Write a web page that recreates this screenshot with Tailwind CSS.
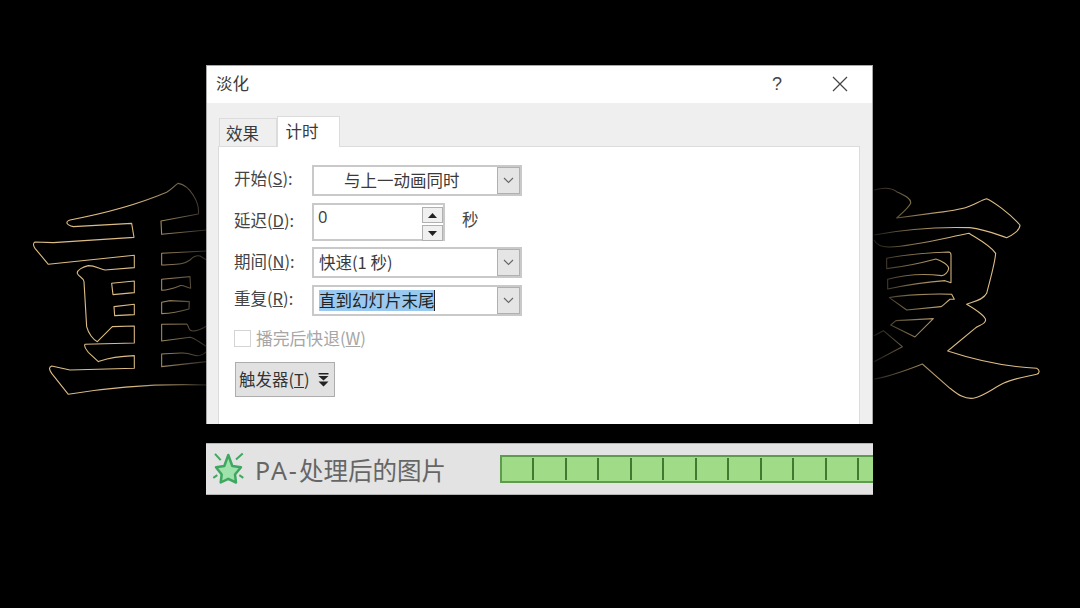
<!DOCTYPE html>
<html lang="zh-CN">
<head>
<meta charset="utf-8">
<script src="https://cdn.jsdelivr.net/npm/@tailwindcss/browser@4"></script>
</head>
<body class="bg-black">
<div class="relative w-[1080px] h-[608px] overflow-hidden bg-black font-['Noto_Sans_CJK_SC',sans-serif] text-[#333]">

  <!-- outlined glyphs behind the dialog -->
  <svg class="absolute left-0 top-0" width="1080" height="608" viewBox="0 0 1080 608" fill="none" stroke-linejoin="round">
    <defs>
      <linearGradient id="gl" gradientUnits="userSpaceOnUse" x1="330" y1="0" x2="560" y2="0">
        <stop offset="0" stop-color="#dcbc84"/><stop offset="0.4" stop-color="#a08a60"/><stop offset="1" stop-color="#2c2822"/>
      </linearGradient>
      <linearGradient id="gr" gradientUnits="userSpaceOnUse" x1="10" y1="0" x2="260" y2="0">
        <stop offset="0" stop-color="#1c1a16"/><stop offset="0.5" stop-color="#8a7650"/><stop offset="1" stop-color="#dcbc84"/>
      </linearGradient>
    </defs>
    <g transform="translate(20 170) scale(0.3333)" stroke="url(#gl)" stroke-width="3.3">
      <path d="M560 180 L425 193 L423 153 L535 132 C540 100 510 45 475 40 C465 45 460 55 440 67 C350 105 230 135 150 150 C135 155 138 165 160 170 L335 160 L342 202 L100 218 L45 216 C38 220 40 228 45 235 L85 283 L343 256 L343 293 L255 300 C235 295 225 287 205 287 C190 290 170 300 172 310 C175 320 190 322 192 335 L200 470 C205 490 220 510 232 515 L277 470 L343 468 L343 519 L195 523 C190 530 200 540 205 547 L235 575 C250 570 270 560 343 557 L343 595 L150 600 L95 588 C85 592 88 600 95 610 L145 673 C250 655 400 640 560 645"/>
      <path d="M275 340 L343 333 L343 368 L279 374 Z"/>
      <path d="M282 410 L343 403 L343 434 L284 437 Z"/>
      <path d="M560 243 L425 250 L425 285 C470 283 490 285 510 270 C520 260 530 255 540 258 L560 270"/>
      <path d="M425 328 L510 320 L512 355 C500 352 490 345 480 347 C460 355 445 360 425 361 Z"/>
      <path d="M425 397 L450 392 L508 395 L507 417 C480 425 450 430 425 431 Z"/>
      <path d="M560 468 C540 480 520 487 510 480 C505 475 505 465 500 462 L425 463 L425 513 L510 502 C525 505 535 515 560 530"/>
      <path d="M560 545 C545 558 535 560 520 555 C490 545 470 550 425 552 L425 590 L560 575"/>
    </g>
    <g transform="translate(870 170) scale(0.3333)" stroke="url(#gr)" stroke-width="3.3">
      <path d="M12 60 C30 55 60 50 80 65 C100 75 125 85 122 100 C115 115 95 130 80 144 L200 128 C240 123 280 118 300 108 C320 100 335 90 350 86 C370 95 420 130 450 165 C450 180 430 195 410 203 C385 195 345 178 300 173 C200 170 100 178 12 195"/>
      <path d="M12 210 C20 225 40 232 60 231 C130 228 220 205 297 190 C320 205 360 225 377 250 C375 280 360 330 350 370 C340 390 310 395 290 403 C310 415 345 435 347 450 C345 465 325 465 315 475 L233 543 C300 565 400 590 500 595 C510 600 510 610 500 613 C470 620 430 625 400 640 C370 655 340 680 310 685 C280 688 260 670 240 655 L157 582 C110 600 60 620 12 627"/>
      <path d="M50 265 L50 296 C100 290 150 280 198 267 C215 272 235 285 236 295 C235 305 225 317 215 317 C160 310 100 315 53 328 L53 357 C110 345 180 335 225 332 L243 338 L243 255 C243 250 240 246 235 246 C180 248 100 255 50 265 Z"/>
      <path d="M58 383 C100 375 190 370 245 373 L253 388 L240 388 C230 395 222 405 213 410 L110 420 Z"/>
      <path d="M62 465 L78 452 L190 446 L135 501 Z"/>
      <path d="M12 497 L40 482 L97 530 L12 575"/>
    </g>
  </svg>

  <div class="relative ml-[206px] pt-[65px] w-[667px] flex flex-col gap-[19px]">

    <!-- dialog -->
    <div class="h-[359px] flex flex-col bg-[#efefef] border-l border-r border-t border-[#a8a8a8] overflow-hidden">
      <div class="h-[37px] shrink-0 bg-white flex items-center pl-[9px] pb-[2px] text-[16.5px] leading-none">
        <span class="flex-1 text-[#3a3a3a]">淡化</span>
        <span class="w-[20px] text-center text-[18px] text-[#444] font-['Liberation_Sans',sans-serif] mr-[45px]">?</span>
        <svg class="mr-[24px]" width="16" height="16" viewBox="0 0 16 16" fill="none" stroke="#444" stroke-width="1.2"><path d="M1 1 L15 15 M15 1 L1 15"/></svg>
      </div>

      <div class="flex-1 flex flex-col pl-[11px] pr-[12px] pt-[12px]">
        <div class="flex items-end h-[31px] shrink-0 text-[16.5px] leading-none">
          <div class="w-[58px] h-[28px] bg-[#efefef] border border-b-0 border-[#dcdcdc] flex items-center justify-center pt-[1px] pr-[11px] ml-[1px] text-[#3a3a3a]">效果</div>
          <div class="relative z-10 w-[63px] h-[31px] -mb-[1px] bg-white border border-b-0 border-[#dcdcdc] flex items-center justify-center pb-[2px] pr-[13px] text-[#3a3a3a]">计时</div>
        </div>
        <div class="flex-1 bg-white border border-[#dcdcdc] border-b-0 pl-[15px] pt-[18px] text-[16.5px] leading-none">

          <div class="flex items-center h-[31px]">
            <span class="w-[78px] text-[#444] -mt-[4px]">开始(<u>S</u>):</span>
            <div class="w-[210px] h-[31px] border-2 border-[#c9c9c9] bg-white flex items-center pl-[30px]">
              <span class="flex-1 text-[#3a3a3a] -mt-[1px]">与上一动画同时</span>
              <div class="w-[23px] h-[27px] bg-[#e5e5e5] border border-[#b0b0b0] flex items-center justify-center">
                <svg width="11" height="7" viewBox="0 0 11 7" fill="none" stroke="#666" stroke-width="1.1"><path d="M1 1 L5.5 5.5 L10 1"/></svg>
              </div>
            </div>
          </div>

          <div class="flex items-center h-[38px] mt-[7px]">
            <span class="w-[78px] text-[#444] -mt-[4px]">延迟(<u>D</u>):</span>
            <div class="w-[133px] h-[38px] border-2 border-[#c9c9c9] bg-white flex items-start pl-[4px] pt-[2px]">
              <span class="flex-1 text-[#3a3a3a] font-['Open_Sans',sans-serif] leading-[20px]">0</span>
              <div class="flex flex-col gap-[2px]">
                <div class="w-[21px] h-[16px] bg-[#f0f0f0] border border-[#b0b0b0] flex items-center justify-center">
                  <svg width="9" height="5" viewBox="0 0 9 5" fill="#222"><path d="M4.5 0 L9 5 L0 5 Z"/></svg>
                </div>
                <div class="w-[21px] h-[16px] bg-[#f0f0f0] border border-[#b0b0b0] flex items-center justify-center">
                  <svg width="9" height="5" viewBox="0 0 9 5" fill="#222"><path d="M0 0 L9 0 L4.5 5 Z"/></svg>
                </div>
              </div>
            </div>
            <span class="ml-[17px] text-[#444] -mt-[5px]">秒</span>
          </div>

          <div class="flex items-center h-[31px] mt-[6px]">
            <span class="w-[78px] text-[#444] -mt-[3px]">期间(<u>N</u>):</span>
            <div class="w-[210px] h-[31px] border-2 border-[#c9c9c9] bg-white flex items-center pl-[5px]">
              <span class="flex-1 text-[#3a3a3a] -mt-[1px]">快速(1 秒)</span>
              <div class="w-[23px] h-[27px] bg-[#e5e5e5] border border-[#b0b0b0] flex items-center justify-center">
                <svg width="11" height="7" viewBox="0 0 11 7" fill="none" stroke="#666" stroke-width="1.1"><path d="M1 1 L5.5 5.5 L10 1"/></svg>
              </div>
            </div>
          </div>

          <div class="flex items-center h-[31px] mt-[7px]">
            <span class="w-[78px] text-[#444] -mt-[4px]">重复(<u>R</u>):</span>
            <div class="w-[210px] h-[31px] border-2 border-[#c9c9c9] bg-white flex items-center pl-[5px]">
              <div class="flex-1 flex items-center">
                <span class="h-[21px] w-[116px] bg-[#99c9ef] text-[#222] leading-[21px] whitespace-nowrap border-r border-[#222]">直到幻灯片末尾</span>
              </div>
              <div class="w-[23px] h-[27px] bg-[#e5e5e5] border border-[#b0b0b0] flex items-center justify-center">
                <svg width="11" height="7" viewBox="0 0 11 7" fill="none" stroke="#666" stroke-width="1.1"><path d="M1 1 L5.5 5.5 L10 1"/></svg>
              </div>
            </div>
          </div>

          <div class="flex items-center h-[17px] mt-[14px]">
            <div class="w-[17px] h-[17px] border border-[#d4d4d4] bg-white"></div>
            <span class="ml-[5px] text-[16.8px] text-[#a6a6a6]">播完后快退(<u>W</u>)</span>
          </div>

          <div class="w-[100px] h-[35px] mt-[15px] ml-[1px] bg-[#e1e1e1] border border-[#adadad] flex items-center pl-[3px] text-[#333]">
            <span class="flex-1">触发器(<u>T</u>)</span>
            <svg class="mr-[5px]" width="11" height="14" viewBox="0 0 11 14" fill="#222"><path d="M0.5 0 H10.5 V1.5 H0.5 Z M0.5 3 H10.5 L5.5 7.5 Z M0.5 8.5 H10.5 L5.5 13.5 Z"/></svg>
          </div>
        </div>
      </div>
    </div>

    <!-- animation pane row -->
    <div class="h-[52px] bg-[#e3e3e3] border-y border-[#b4b4b4] flex items-center overflow-hidden">
      <svg class="ml-[6px] shrink-0" width="34" height="34" viewBox="0 0 34 34">
        <path d="M16.300 3 L20.300 14 L29 15.200 L23 22.500 L24 30.500 L16.300 26.800 L8.700 30.500 L9.700 22.500 L4 15.200 L12.300 14 Z" fill="#9fe2ac" stroke="#3fa860" stroke-width="2.500" stroke-linejoin="round"/>
        <path d="M3 1.800 L8.700 8.200 M30.700 1.500 L24 7.500 M1.300 25.800 L5.300 23.200 M31.300 25.800 L27.300 23.200" stroke="#3fa860" stroke-width="2" fill="none"/>
      </svg>
      <span class="ml-[9px] mt-[3px] w-[245px] shrink-0 text-[24.5px] leading-none text-[#666] font-['Noto_Sans','Noto_Sans_CJK_SC',sans-serif] whitespace-nowrap"><span class="text-[25px] tracking-[2px]">PA-</span>处理后的图片</span>
      <div class="flex-1 h-[28px] bg-[#a0dc87] border-2 border-r-0 border-[#5c9c4c] flex items-stretch overflow-hidden">
        <div class="w-[32px] shrink-0 my-[1px] border-r-2 border-[#3f7a30]"></div>
        <div class="w-[32.5px] shrink-0 my-[1px] border-r-2 border-[#3f7a30]"></div>
        <div class="w-[32.5px] shrink-0 my-[1px] border-r-2 border-[#3f7a30]"></div>
        <div class="w-[32.5px] shrink-0 my-[1px] border-r-2 border-[#3f7a30]"></div>
        <div class="w-[32.5px] shrink-0 my-[1px] border-r-2 border-[#3f7a30]"></div>
        <div class="w-[32.5px] shrink-0 my-[1px] border-r-2 border-[#3f7a30]"></div>
        <div class="w-[32.5px] shrink-0 my-[1px] border-r-2 border-[#3f7a30]"></div>
        <div class="w-[32.5px] shrink-0 my-[1px] border-r-2 border-[#3f7a30]"></div>
        <div class="w-[32.5px] shrink-0 my-[1px] border-r-2 border-[#3f7a30]"></div>
        <div class="w-[32.5px] shrink-0 my-[1px] border-r-2 border-[#3f7a30]"></div>
        <div class="w-[32.5px] shrink-0 my-[1px] border-r-2 border-[#3f7a30]"></div>
      </div>
    </div>
  </div>
</div>
</body>
</html>
